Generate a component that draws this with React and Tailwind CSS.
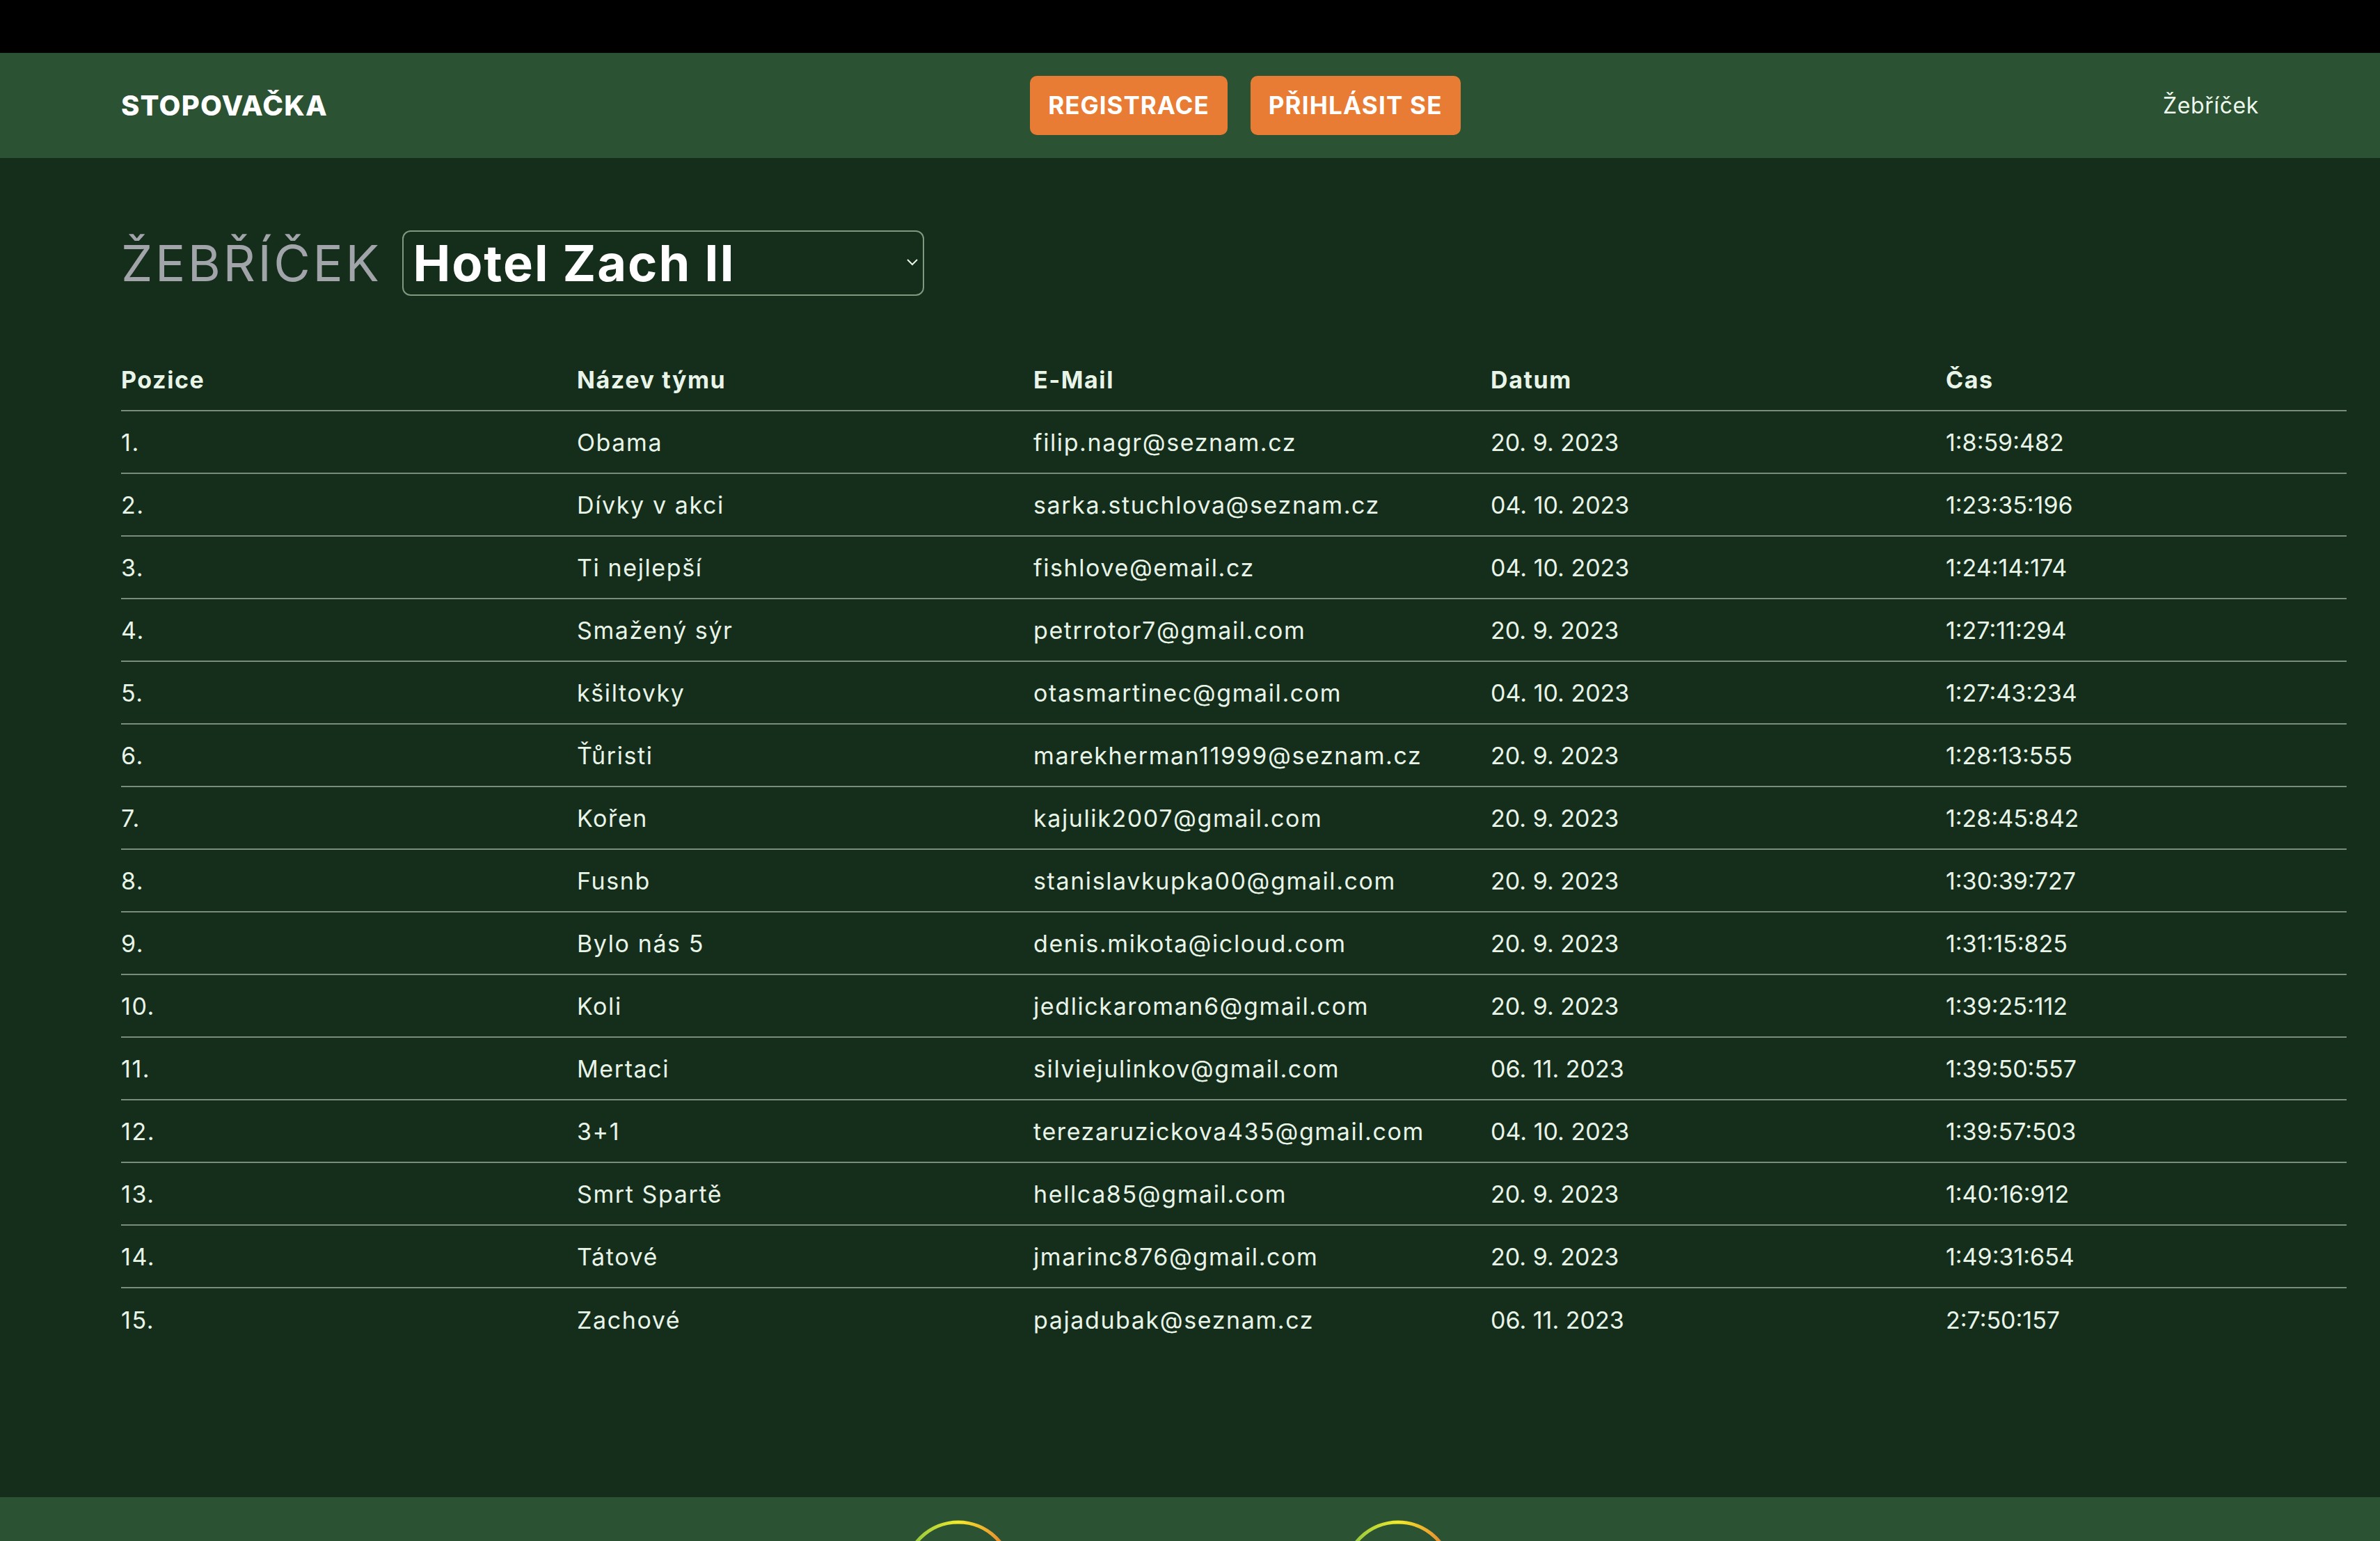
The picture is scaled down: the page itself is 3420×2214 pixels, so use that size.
import { useState } from 'react';

const rows = [
  ['1.', 'Obama', 'filip.nagr@seznam.cz', '20. 9. 2023', '1:8:59:482'],
  ['2.', 'Dívky v akci', 'sarka.stuchlova@seznam.cz', '04. 10. 2023', '1:23:35:196'],
  ['3.', 'Ti nejlepší', 'fishlove@email.cz', '04. 10. 2023', '1:24:14:174'],
  ['4.', 'Smažený sýr', 'petrrotor7@gmail.com', '20. 9. 2023', '1:27:11:294'],
  ['5.', 'kšiltovky', 'otasmartinec@gmail.com', '04. 10. 2023', '1:27:43:234'],
  ['6.', 'Ťůristi', 'marekherman11999@seznam.cz', '20. 9. 2023', '1:28:13:555'],
  ['7.', 'Kořen', 'kajulik2007@gmail.com', '20. 9. 2023', '1:28:45:842'],
  ['8.', 'Fusnb', 'stanislavkupka00@gmail.com', '20. 9. 2023', '1:30:39:727'],
  ['9.', 'Bylo nás 5', 'denis.mikota@icloud.com', '20. 9. 2023', '1:31:15:825'],
  ['10.', 'Koli', 'jedlickaroman6@gmail.com', '20. 9. 2023', '1:39:25:112'],
  ['11.', 'Mertaci', 'silviejulinkov@gmail.com', '06. 11. 2023', '1:39:50:557'],
  ['12.', '3+1', 'terezaruzickova435@gmail.com', '04. 10. 2023', '1:39:57:503'],
  ['13.', 'Smrt Spartě', 'hellca85@gmail.com', '20. 9. 2023', '1:40:16:912'],
  ['14.', 'Tátové', 'jmarinc876@gmail.com', '20. 9. 2023', '1:49:31:654'],
  ['15.', 'Zachové', 'pajadubak@seznam.cz', '06. 11. 2023', '2:7:50:157'],
];

const headers = ['Pozice', 'Název týmu', 'E-Mail', 'Datum', 'Čas'];

function Ring({ id }) {
  return (
    <svg width="160" height="160" viewBox="0 0 160 160">
      <defs>
        <linearGradient id={id} x1="0" y1="0" x2="1" y2="0">
          <stop offset="0%" stopColor="#7fc241" />
          <stop offset="50%" stopColor="#f2ea2c" />
          <stop offset="100%" stopColor="#e8772f" />
        </linearGradient>
      </defs>
      <circle cx="80" cy="80" r="77" fill="none" stroke={`url(#${id})`} strokeWidth="5" />
    </svg>
  );
}

export default function App() {
  const [race, setRace] = useState('zach2');

  return (
    <div className="min-h-screen bg-[#152e1b] font-['Inter',sans-serif] text-[#e9f4e9]">
      <div className="h-[76px] bg-black" />

      <header className="flex h-[151px] items-center justify-between bg-[#2a5233] px-[174px]">
        <a href="#" className="text-[40px] font-extrabold tracking-[1.2px] text-white">
          STOPOVAČKA
        </a>
        <div className="flex items-center gap-[33px]">
          <button className="h-[85px] rounded-[10px] bg-[#e87c34] px-[26px] text-[35px] font-bold tracking-[1px] text-white">
            REGISTRACE
          </button>
          <button className="h-[85px] rounded-[10px] bg-[#e87c34] px-[26px] text-[35px] font-bold tracking-[1.2px] text-white">
            PŘIHLÁSIT SE
          </button>
        </div>
        <a href="#" className="text-[32px] tracking-[0.6px] text-[#eef7ee]">
          Žebříček
        </a>
      </header>

      <main className="pl-[174px] pr-[48px] pt-[104px] pb-[210px]">
        <div className="flex items-center gap-[30px]">
          <h1 className="text-[72px] font-normal uppercase leading-none tracking-[3.6px] text-[#a1a5a9]">Žebříček</h1>
          <div className="relative">
            <select
              value={race}
              onChange={(e) => setRace(e.target.value)}
              className="h-[94px] w-[750px] appearance-none rounded-[12px] border-2 border-[#7d9a80] bg-transparent pl-[13px] text-[72px] font-bold leading-none tracking-[2px] text-white outline-none"
            >
              <option value="zach2" className="text-black">Hotel Zach II</option>
            </select>
            <svg
              className="pointer-events-none absolute right-[9px] top-[41px]"
              width="16"
              height="10"
              viewBox="0 0 16 10"
              fill="none"
              stroke="#e9f4e9"
              strokeWidth="2"
            >
              <path d="M1 1l7 7 7-7" />
            </svg>
          </div>
        </div>

        <div className="mt-[76px] tracking-[1.6px]">
          <div className="grid h-[90px] grid-cols-[655px_656px_657px_654px_1fr] items-center border-b-2 border-[#7a8c7b] text-[34px] font-bold">
            {headers.map((h) => (
              <div key={h}>{h}</div>
            ))}
          </div>
          {rows.map((r, i) => (
            <div
              key={r[0]}
              className={`grid h-[90px] grid-cols-[655px_656px_657px_654px_1fr] items-center text-[34px] ${
                i < rows.length - 1 ? 'border-b-2 border-[#7a8c7b]' : ''
              }`}
            >
              <div>{r[0]}</div>
              <div>{r[1]}</div>
              <div>{r[2]}</div>
              <div className="tracking-[0px]">{r[3]}</div>
              <div className="tracking-[0px]">{r[4]}</div>
            </div>
          ))}
        </div>
      </main>

      <footer className="flex h-[300px] justify-center gap-[472px] bg-[#2a5233] pr-[34px] pt-[33px]">
        <Ring id="ringA" />
        <Ring id="ringB" />
      </footer>
    </div>
  );
}
